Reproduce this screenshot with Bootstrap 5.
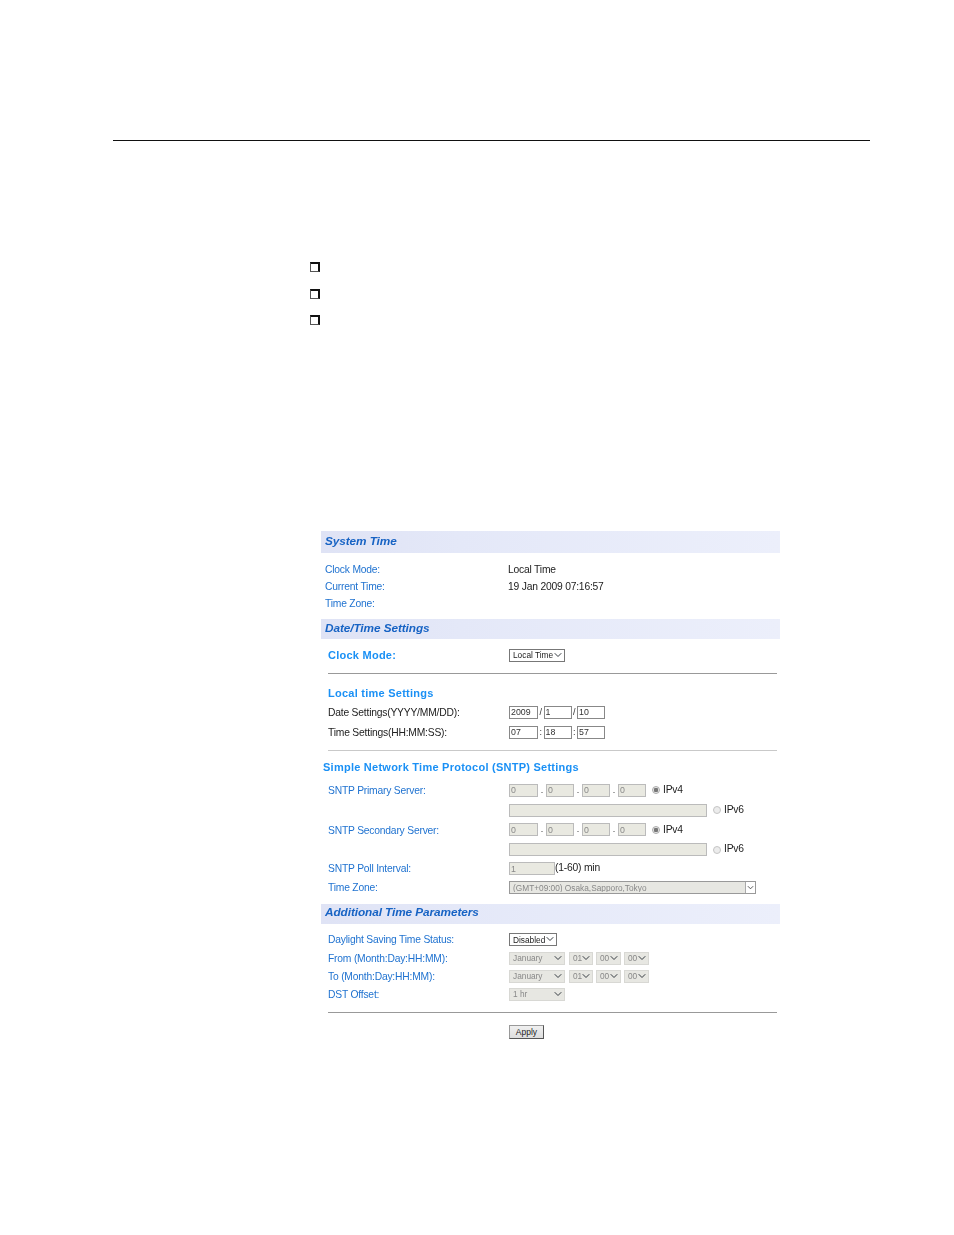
<!DOCTYPE html>
<html lang="en">
<head>
<meta charset="utf-8">
<title>System Time</title>
<link href="https://cdn.jsdelivr.net/npm/bootstrap@5.3.0/dist/css/bootstrap.min.css" rel="stylesheet">
<style>
html,body{background:#fff;margin:0;font-family:"Liberation Sans",Arial,sans-serif;color:#111}
.page-sheet{width:954px;height:1235px;overflow:hidden;padding-top:140px}
.top-rule{margin:0 84px 0 113px;height:1px;background:#111}
.box-list{list-style:none;margin:121px 0 0 310px;padding:0;height:269px}
.box-list li{height:26.5px}
.box-mark{display:block;width:10px;height:10px;border:1px solid #555;border-top:2px solid #111;border-right:2px solid #111}
.panel{width:459px;margin-left:321px;font-size:10.3px;letter-spacing:-.2px;line-height:1;filter:blur(.3px)}
.sec-head{height:20px;padding:0 0 1px 4px;background:linear-gradient(90deg,#dfe3f5 0,#e4e8f8 30%,#eceffb 100%);font-weight:700;font-style:italic;font-size:11.8px;letter-spacing:-.08px;color:#1763c4}
.first-head{height:22px}
.cfg-row{padding-left:7px;color:#1f72d0}
.cfg-row.tight{padding-left:4px}
.lab{width:181px;flex:none;padding-top:2px}
.tight .lab{width:183px}
.big-lab{padding-top:0}
.lab-dark{color:#222}
.val{color:#222;padding-top:2px}
.h17{height:17px}.h18{height:18px}.h19{height:19.5px}.h20{height:20px}
.sp8{height:8px}.sp7{height:7px}.sp6{height:6px}.sp4{height:4px}
.big-lab{font-weight:700;color:#1a90f5;font-size:11px;letter-spacing:.25px}
.wide-head{padding-left:2px}
.rule-line{margin:0 3px 0 7px;height:1px;background:#999}
.rule-pale{background:#c9c9c9}
.gap-a{height:9px}.gap-b{height:10px}.gap-c{height:7px}.gap-d{height:8px}
.fld{width:28px;height:13px;padding:0 1px;border:1px solid #888;border-radius:0;font-size:8.8px;line-height:1;color:#333;background:#fff;min-height:0;font-family:inherit}
.fld-lead{width:29px}
.fld:disabled{background-color:#e9e9e1;border-color:#bbb;color:#888;opacity:1}
.fld-wide{width:198px}
.fld-poll{width:46px}
.sel{height:13px;min-height:0;padding:1px 0 0 3px;border:1px solid #777;border-radius:0;font-size:8.3px;line-height:1;letter-spacing:0;color:#222;background-position:right 2px center;background-size:8px 8px;font-family:inherit}
.sel:disabled{background-color:#e7e7e2;border-color:#d8d8d4;color:#888}
.sel-mode{width:56px}.sel-dis{width:48px}.sel-mon{width:56px;margin-right:1px}.sel-num{width:25px}.sel-num-a{width:24px}
.sel-zone,.sel-zone:disabled{width:247px;border-color:#999;background-image:url("data:image/svg+xml,%3csvg xmlns='http://www.w3.org/2000/svg' viewBox='0 0 16 16'%3e%3cpath fill='none' stroke='%23444' stroke-width='2' d='M2 5l6 6 6-6'/%3e%3c/svg%3e"),linear-gradient(#fff,#fff),linear-gradient(#aaa,#aaa);background-repeat:no-repeat;background-position:right 1px center,right 0 center,right 0 center;background-size:7px 7px,9px 11px,10px 11px}
.sep{color:#333;width:5.5px;text-align:center;font-size:9px}
.sep-dot{width:8px}
.radio-dot{width:8px;height:8px;margin:0 3px 0 6px;flex:none;border-radius:50%;border:1px solid #c4c4c4;background:#ececec}
.radio-on{background:radial-gradient(circle,#777 0 2px,#e8e8e8 2.5px);border-color:#aaa}
.apply-btn{width:35px;height:14px;padding:0;font-size:8.5px;line-height:1;letter-spacing:0;color:#222;background:linear-gradient(#f0f0f0,#dedede);border:1px solid #999;border-right-color:#555;border-bottom-color:#555;border-radius:0}
.tail{color:#222}
.sel-set{gap:3px}
</style>
</head>
<body>
<div class="page-sheet">
  <div class="top-rule"></div>
  <ul class="box-list">
    <li><span class="box-mark"></span></li>
    <li><span class="box-mark"></span></li>
    <li><span class="box-mark"></span></li>
  </ul>
  <div class="panel">
    <div class="sec-head first-head d-flex align-items-center">System Time</div>
    <div class="sp8"></div>
    <div class="cfg-row tight h17 d-flex align-items-center"><div class="lab">Clock Mode:</div><div class="val">Local Time</div></div>
    <div class="cfg-row tight h17 d-flex align-items-center"><div class="lab">Current Time:</div><div class="val">19 Jan 2009 07:16:57</div></div>
    <div class="cfg-row tight h17 d-flex align-items-center"><div class="lab">Time Zone:</div></div>
    <div class="sp7"></div>
    <div class="sec-head d-flex align-items-center">Date/Time Settings</div>
    <div class="sp7"></div>
    <div class="cfg-row h18 d-flex align-items-center"><div class="lab big-lab">Clock Mode:</div><select class="form-select sel sel-mode"><option>Local Time</option></select></div>
    <div class="gap-a"></div>
    <div class="rule-line"></div>
    <div class="gap-b"></div>
    <div class="cfg-row h18 d-flex align-items-center"><div class="lab big-lab">Local time Settings</div></div>
    <div class="cfg-row h20 d-flex align-items-center"><div class="lab lab-dark">Date Settings(YYYY/MM/DD):</div><div class="d-flex align-items-center"><input class="form-control fld fld-lead" value="2009"><span class="sep">/</span><input class="form-control fld" value="1"><span class="sep">/</span><input class="form-control fld" value="10"></div></div>
    <div class="cfg-row h20 d-flex align-items-center"><div class="lab lab-dark">Time Settings(HH:MM:SS):</div><div class="d-flex align-items-center"><input class="form-control fld fld-lead" value="07"><span class="sep">:</span><input class="form-control fld" value="18"><span class="sep">:</span><input class="form-control fld" value="57"></div></div>
    <div class="gap-d"></div>
    <div class="rule-line rule-pale"></div>
    <div class="gap-c"></div>
    <div class="cfg-row wide-head h18 d-flex align-items-center"><div class="big-lab">Simple Network Time Protocol (SNTP) Settings</div></div>
    <div class="sp4"></div>
    <div class="cfg-row h20 d-flex align-items-center"><div class="lab">SNTP Primary Server:</div><div class="d-flex align-items-center"><input class="form-control fld fld-lead" value="0" disabled><span class="sep sep-dot">.</span><input class="form-control fld" value="0" disabled><span class="sep sep-dot">.</span><input class="form-control fld" value="0" disabled><span class="sep sep-dot">.</span><input class="form-control fld" value="0" disabled><span class="radio-dot radio-on"></span><span class="tail">IPv4</span></div></div>
    <div class="cfg-row h20 d-flex align-items-center"><div class="lab"></div><div class="d-flex align-items-center"><input class="form-control fld fld-wide" disabled><span class="radio-dot"></span><span class="tail">IPv6</span></div></div>
    <div class="cfg-row h19 d-flex align-items-center"><div class="lab">SNTP Secondary Server:</div><div class="d-flex align-items-center"><input class="form-control fld fld-lead" value="0" disabled><span class="sep sep-dot">.</span><input class="form-control fld" value="0" disabled><span class="sep sep-dot">.</span><input class="form-control fld" value="0" disabled><span class="sep sep-dot">.</span><input class="form-control fld" value="0" disabled><span class="radio-dot radio-on"></span><span class="tail">IPv4</span></div></div>
    <div class="cfg-row h20 d-flex align-items-center"><div class="lab"></div><div class="d-flex align-items-center"><input class="form-control fld fld-wide" disabled><span class="radio-dot"></span><span class="tail">IPv6</span></div></div>
    <div class="cfg-row h18 d-flex align-items-center"><div class="lab">SNTP Poll Interval:</div><div class="d-flex align-items-center"><input class="form-control fld fld-poll" value="1" disabled><span class="tail">(1-60) min</span></div></div>
    <div class="cfg-row h20 d-flex align-items-center"><div class="lab">Time Zone:</div><select class="form-select sel sel-zone" disabled><option>(GMT+09:00) Osaka,Sapporo,Tokyo</option></select></div>
    <div class="sp6"></div>
    <div class="sec-head d-flex align-items-center">Additional Time Parameters</div>
    <div class="sp6"></div>
    <div class="cfg-row h19 d-flex align-items-center"><div class="lab">Daylight Saving Time Status:</div><select class="form-select sel sel-dis"><option>Disabled</option></select></div>
    <div class="cfg-row h18 d-flex align-items-center"><div class="lab">From (Month:Day:HH:MM):</div><div class="d-flex sel-set"><select class="form-select sel sel-mon" disabled><option>January</option></select><select class="form-select sel sel-num-a" disabled><option>01</option></select><select class="form-select sel sel-num" disabled><option>00</option></select><select class="form-select sel sel-num" disabled><option>00</option></select></div></div>
    <div class="cfg-row h18 d-flex align-items-center"><div class="lab">To (Month:Day:HH:MM):</div><div class="d-flex sel-set"><select class="form-select sel sel-mon" disabled><option>January</option></select><select class="form-select sel sel-num-a" disabled><option>01</option></select><select class="form-select sel sel-num" disabled><option>00</option></select><select class="form-select sel sel-num" disabled><option>00</option></select></div></div>
    <div class="cfg-row h18 d-flex align-items-center"><div class="lab">DST Offset:</div><select class="form-select sel sel-mon" disabled><option>1 hr</option></select></div>
    <div class="gap-a"></div>
    <div class="rule-line"></div>
    <div class="gap-b"></div>
    <div class="cfg-row h18 d-flex align-items-center"><div class="lab"></div><button type="button" class="btn apply-btn">Apply</button></div>
  </div>
</div>
<script src="https://cdn.jsdelivr.net/npm/bootstrap@5.3.0/dist/js/bootstrap.bundle.min.js"></script>
</body>
</html>
